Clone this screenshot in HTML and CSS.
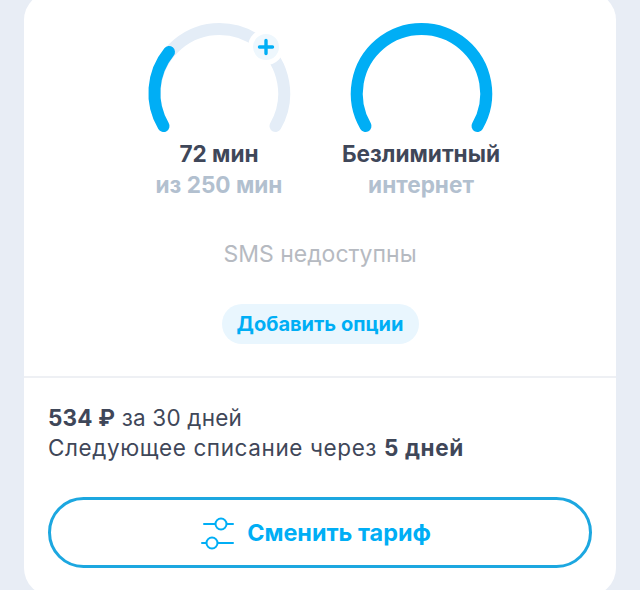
FILE: index.html
```html
<!DOCTYPE html>
<html lang="ru">
<head>
    <meta charset="UTF-8">
    <title>Тариф</title>
    <link rel="stylesheet" href="styles.css">
</head>
<body>
    <div class="card">
        <div class="card-top">
            <div class="gauges">
                <div class="gauge">
                    <div class="gauge-ring">
                        <svg width="160" height="120" viewBox="-0.5 0 160 120" fill="none" stroke-width="12" stroke-linecap="round">
                            <path class="arc-bg" d="M24 110 A64.7 64.7 0 1 1 136 110"/>
                            <path class="arc-on" d="M24 110 A64.7 64.7 0 0 1 29.5 36"/>
                        </svg>
                        <span class="gauge-plus">
                            <svg width="18" height="18" viewBox="0 0 18 18" fill="none" stroke-width="3.4" stroke-linecap="round">
                                <path class="arc-on" d="M9 2.5 V15.5 M2.5 9 H15.5"/>
                            </svg>
                        </span>
                    </div>
                    <div class="gauge-value">72 мин</div>
                    <div class="gauge-label">из 250 мин</div>
                </div>
                <div class="gauge">
                    <div class="gauge-ring">
                        <svg width="160" height="120" viewBox="-0.5 0 160 120" fill="none" stroke-width="12" stroke-linecap="round">
                            <path class="arc-on" d="M24 110 A64.7 64.7 0 1 1 136 110"/>
                        </svg>
                    </div>
                    <div class="gauge-value">Безлимитный</div>
                    <div class="gauge-label">интернет</div>
                </div>
            </div>
            <p class="sms-note">SMS недоступны</p>
            <a class="add-options" href="#">Добавить опции</a>
        </div>
        <div class="card-bottom">
            <p class="billing billing-price"><b>534 ₽</b> за 30 дней</p>
            <p class="billing">Следующее списание через <b>5 дней</b></p>
            <a class="change-plan" href="#">
                <svg width="34" height="34" viewBox="0 0 34 34" fill="none" stroke-width="2" stroke-linecap="round">
                    <path d="M3 8 H14 M26 8 H32 M1 27 H5 M17 27 H32"/>
                    <circle cx="20" cy="8" r="5.5"/>
                    <circle cx="11" cy="27" r="5.5"/>
                </svg>
                Сменить тариф
            </a>
        </div>
    </div>
</body>
</html>
```

FILE: styles.css
```css
html, body {
    height: 100%;
}
body {
    margin: 0;
    overflow: hidden;
    background-color: #e8edf5;
    font-family: Inter, "Noto Sans", sans-serif;
    color: #3f4759;
}
p {
    margin: 0;
}
a {
    text-decoration: none;
}
.card {
    margin: -8px 24px 0;
    height: 604px;
    box-sizing: border-box;
    background-color: #fff;
    border-radius: 28px;
}
.card-top {
    height: 386px;
    box-sizing: border-box;
    padding-top: 24px;
    border-bottom: 2px solid #eef0f4;
    display: flex;
    flex-direction: column;
    align-items: center;
}
.gauges {
    display: flex;
    gap: 42px;
}
.gauge {
    width: 160px;
    display: flex;
    flex-direction: column;
    align-items: center;
    font-size: 22.6px;
    font-weight: 700;
    line-height: 31px;
    white-space: nowrap;
}
.gauge-ring {
    position: relative;
    height: 122px;
}
.gauge-ring svg {
    display: block;
}
.arc-bg {
    stroke: #e4edf7;
}
.arc-on {
    stroke: #00aef5;
}
.gauge-plus {
    position: absolute;
    left: 109px;
    top: 13px;
    width: 26px;
    height: 26px;
    display: flex;
    align-items: center;
    justify-content: center;
    background-color: #eef7fd;
    border: 5px solid #fff;
    border-radius: 50%;
}
.gauge-label {
    color: #b2c0cf;
}
.sms-note {
    margin-top: 39px;
    font-size: 23px;
    line-height: 30px;
    color: #b6bac1;
}
.add-options {
    margin-top: 35px;
    width: 197px;
    height: 40px;
    display: flex;
    align-items: center;
    justify-content: center;
    background-color: #e9f6fe;
    border-radius: 20px;
    color: #00aef5;
    font-size: 20px;
    font-weight: 700;
}
.card-bottom {
    padding: 25px 24px 0;
}
.billing {
    font-size: 22.5px;
    line-height: 30px;
    letter-spacing: 0.6px;
}
.billing-price {
    letter-spacing: 0.2px;
}
.change-plan {
    margin-top: 34px;
    height: 71px;
    box-sizing: border-box;
    padding-right: 8px;
    display: flex;
    align-items: center;
    justify-content: center;
    gap: 12px;
    border: 3px solid #1ca7e0;
    border-radius: 36px;
    color: #00aef5;
    font-size: 23.4px;
    font-weight: 700;
}
.change-plan svg {
    stroke: #00aef5;
}
```
